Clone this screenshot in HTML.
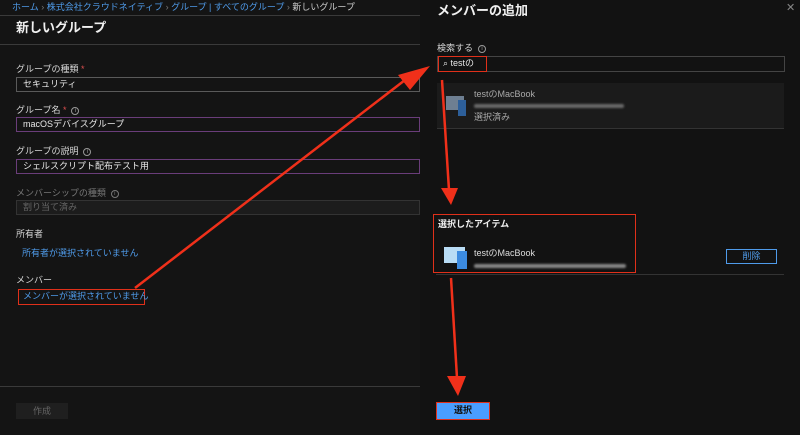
<!DOCTYPE html>
<html><head><meta charset="utf-8"><style>
*{margin:0;padding:0;box-sizing:border-box}
body{width:800px;height:435px;background:#141414;font-family:"Liberation Sans","Noto Sans CJK JP",sans-serif;color:#e6e6e6;position:relative;overflow:hidden;font-size:9px}
.a{position:absolute;white-space:nowrap}
.lbl{font-size:9px;color:#d8d8d8}
.inp{position:absolute;left:16px;width:404px;height:15px;border:1px solid #5a5a5a;font-size:9px;padding:0 0 0 6px;line-height:13px;color:#e8e8e8}
.link{color:#4f9bea}
.star{color:#e05050}
.i{display:inline-block;width:8px;height:8px;border:1px solid #999;border-radius:50%;font-size:6px;line-height:6px;text-align:center;margin-left:5px;vertical-align:middle;color:#999}
.blur{position:absolute;height:4px;background:#6a6a6a;border-radius:2px;filter:blur(1px)}
</style></head><body>
<div class="a" style="left:12px;top:0px;font-size:9px"><span class="link">ホーム</span> <span style="color:#777">›</span> <span class="link">株式会社クラウドネイティブ</span> <span style="color:#777">›</span> <span class="link">グループ | すべてのグループ</span> <span style="color:#777">›</span> <span style="color:#ccc">新しいグループ</span></div>
<div style="position:absolute;left:0;top:15px;width:420px;height:1px;background:#3a3a3a"></div>
<div class="a" style="left:16px;top:17px;font-size:13px;font-weight:bold;color:#f0f0f0">新しいグループ</div>
<div style="position:absolute;left:0;top:44px;width:420px;height:1px;background:#3a3a3a"></div>
<div class="a lbl" style="left:16px;top:62px">グループの種類 <span class="star">*</span></div>
<div class="inp" style="top:77px">セキュリティ</div>
<div class="a lbl" style="left:16px;top:103px">グループ名 <span class="star">*</span><span class="i">i</span></div>
<div class="inp" style="top:117px;border-color:#6a3d7a">macOSデバイスグループ</div>
<div class="a lbl" style="left:16px;top:144px">グループの説明<span class="i">i</span></div>
<div class="inp" style="top:159px;border-color:#6a3d7a">シェルスクリプト配布テスト用</div>
<div class="a lbl" style="left:16px;top:186px;color:#777">メンバーシップの種類<span class="i" style="border-color:#777;color:#777">i</span></div>
<div class="inp" style="top:200px;border-color:#333;background:#1c1c1c;color:#666">割り当て済み</div>
<div class="a lbl" style="left:16px;top:227px">所有者</div>
<div class="a link" style="left:22px;top:246px">所有者が選択されていません</div>
<div class="a lbl" style="left:16px;top:273px">メンバー</div>
<div class="a link" style="left:18px;top:289px;width:127px;height:16px;border:1.5px solid #e0301a;padding:0 0 0 4px;line-height:13px">メンバーが選択されていません</div>
<div style="position:absolute;left:0;top:386px;width:420px;height:1px;background:#3a3a3a"></div>
<div class="a" style="left:16px;top:403px;width:52px;height:16px;background:#1f1f1f;color:#666;text-align:center;line-height:16px">作成</div>

<div style="position:absolute;left:420px;top:0;width:380px;height:435px;background:#121212"></div>
<div class="a" style="left:437px;top:0px;font-size:13px;font-weight:bold;color:#f0f0f0">メンバーの追加</div>
<div class="a" style="left:786px;top:1px;font-size:11px;color:#888">✕</div>
<div class="a lbl" style="left:437px;top:41px">検索する<span class="i">i</span></div>
<div style="position:absolute;left:437px;top:56px;width:348px;height:16px;border:1px solid #444"></div>
<div class="a" style="left:438px;top:56px;width:49px;height:16px;border:1.5px solid #e0301a;padding:0 0 0 4px;line-height:13px;font-size:9px">⌕ testの</div>
<div style="position:absolute;left:437px;top:83px;width:347px;height:46px;background:#1b1b1b;border-bottom:1px solid #333"></div>
<div style="position:absolute;left:446px;top:96px;width:18px;height:14px;background:#6e7f92"></div>
<div style="position:absolute;left:458px;top:100px;width:8px;height:16px;background:#2d5f9a"></div>
<div class="a" style="left:474px;top:87px;color:#aaa">testのMacBook</div>
<div class="blur" style="left:474px;top:104px;width:150px"></div>
<div class="a" style="left:474px;top:110px;color:#aaa">選択済み</div>
<div style="position:absolute;left:433px;top:214px;width:203px;height:59px;border:1.5px solid #e0301a"></div>
<div class="a" style="left:438px;top:217px;font-weight:bold;color:#eee">選択したアイテム</div>
<div style="position:absolute;left:444px;top:247px;width:21px;height:16px;background:#b8dcf5"></div>
<div style="position:absolute;left:457px;top:251px;width:10px;height:18px;background:#3c8be0"></div>
<div class="a" style="left:474px;top:246px;color:#ddd">testのMacBook</div>
<div class="blur" style="left:474px;top:264px;width:152px;background:#888"></div>
<div style="position:absolute;left:436px;top:274px;width:348px;height:1px;background:#333"></div>
<div class="a" style="left:726px;top:249px;width:51px;height:15px;border:1px solid #4f9bea;color:#4f9bea;text-align:center;line-height:13px">削除</div>
<div class="a" style="left:436px;top:402px;width:54px;height:18px;background:#4a9eff;border:1.5px solid #e0301a;color:#111;text-align:center;line-height:15px;font-weight:bold">選択</div>

<svg style="position:absolute;left:0;top:0" width="800" height="435">
<g stroke="#f0301a" stroke-width="2.5" fill="#f0301a">
<line x1="135" y1="288" x2="405" y2="80"/>
<polygon points="430,66 398,75 410,90" stroke="none"/>
<line x1="442" y1="80" x2="449" y2="190"/>
<polygon points="441,188 458,188 451,205" stroke="none"/>
<line x1="451" y1="278" x2="457" y2="378"/>
<polygon points="447,376 466,376 458,396" stroke="none"/>
</g></svg>
</body></html>
